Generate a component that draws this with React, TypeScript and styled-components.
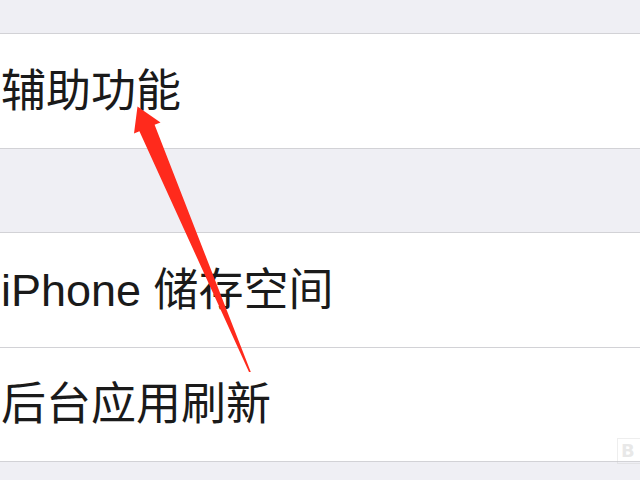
import React from "react";
import styled, { createGlobalStyle } from "styled-components";

const GlobalStyle = createGlobalStyle`
  html, body {
    margin: 0;
    padding: 0;
    background: #efeff4;
  }
  body {
    font-family: "Liberation Sans", "Noto Sans CJK SC", sans-serif;
  }
`;

const Screen = styled.div`
  position: relative;
  width: 640px;
  height: 480px;
  overflow: hidden;
  background: #efeff4;
  display: flex;
  flex-direction: column;
`;

const Spacer = styled.div<{ $h: number }>`
  flex: 0 0 ${(p) => p.$h}px;
`;

const Group = styled.div`
  background: #ffffff;
  border-top: 1px solid #d2d2d6;
  border-bottom: 1px solid #d2d2d6;
  display: flex;
  flex-direction: column;
`;

const Row = styled.div`
  height: 114px;
  display: flex;
  align-items: center;
  padding-left: 1px;
  font-size: 45px;
  color: #1a1a1a;
  white-space: nowrap;

  & + & {
    border-top: 1px solid #d2d2d6;
    height: 113px;
  }
`;

const Label = styled.span`
  font-family: "Liberation Sans", "Noto Sans CJK SC", sans-serif;
  line-height: 1;
`;

const Overlay = styled.svg`
  position: absolute;
  left: 0;
  top: 0;
  pointer-events: none;
`;

const Watermark = styled.div`
  position: absolute;
  right: -4px;
  top: 438px;
  width: 22px;
  height: 24px;
  border: 1px solid rgba(200, 200, 200, 0.3);
  color: rgba(190, 190, 190, 0.35);
  font-family: "DejaVu Sans", sans-serif;
  font-weight: bold;
  font-size: 18px;
  line-height: 24px;
  padding-left: 3px;
`;

const sections = [
  ["辅助功能"],
  ["iPhone 储存空间", "后台应用刷新"],
];

export default function App() {
  return (
    <Screen>
      <GlobalStyle />
      <Spacer $h={33} />
      <Group>
        {sections[0].map((t) => (
          <Row key={t}>
            <Label>{t}</Label>
          </Row>
        ))}
      </Group>
      <Spacer $h={83} />
      <Group>
        {sections[1].map((t) => (
          <Row key={t}>
            <Label>{t}</Label>
          </Row>
        ))}
      </Group>
      <Watermark>B</Watermark>
      <Overlay width="640" height="480" viewBox="0 0 640 480">
        <polygon
          points="137.5,106.5 160.5,122.5 154.6,124.8 250.8,372 249,372 139.4,131.2 134,133.5"
          fill="#ff2a1c"
        />
      </Overlay>
    </Screen>
  );
}
